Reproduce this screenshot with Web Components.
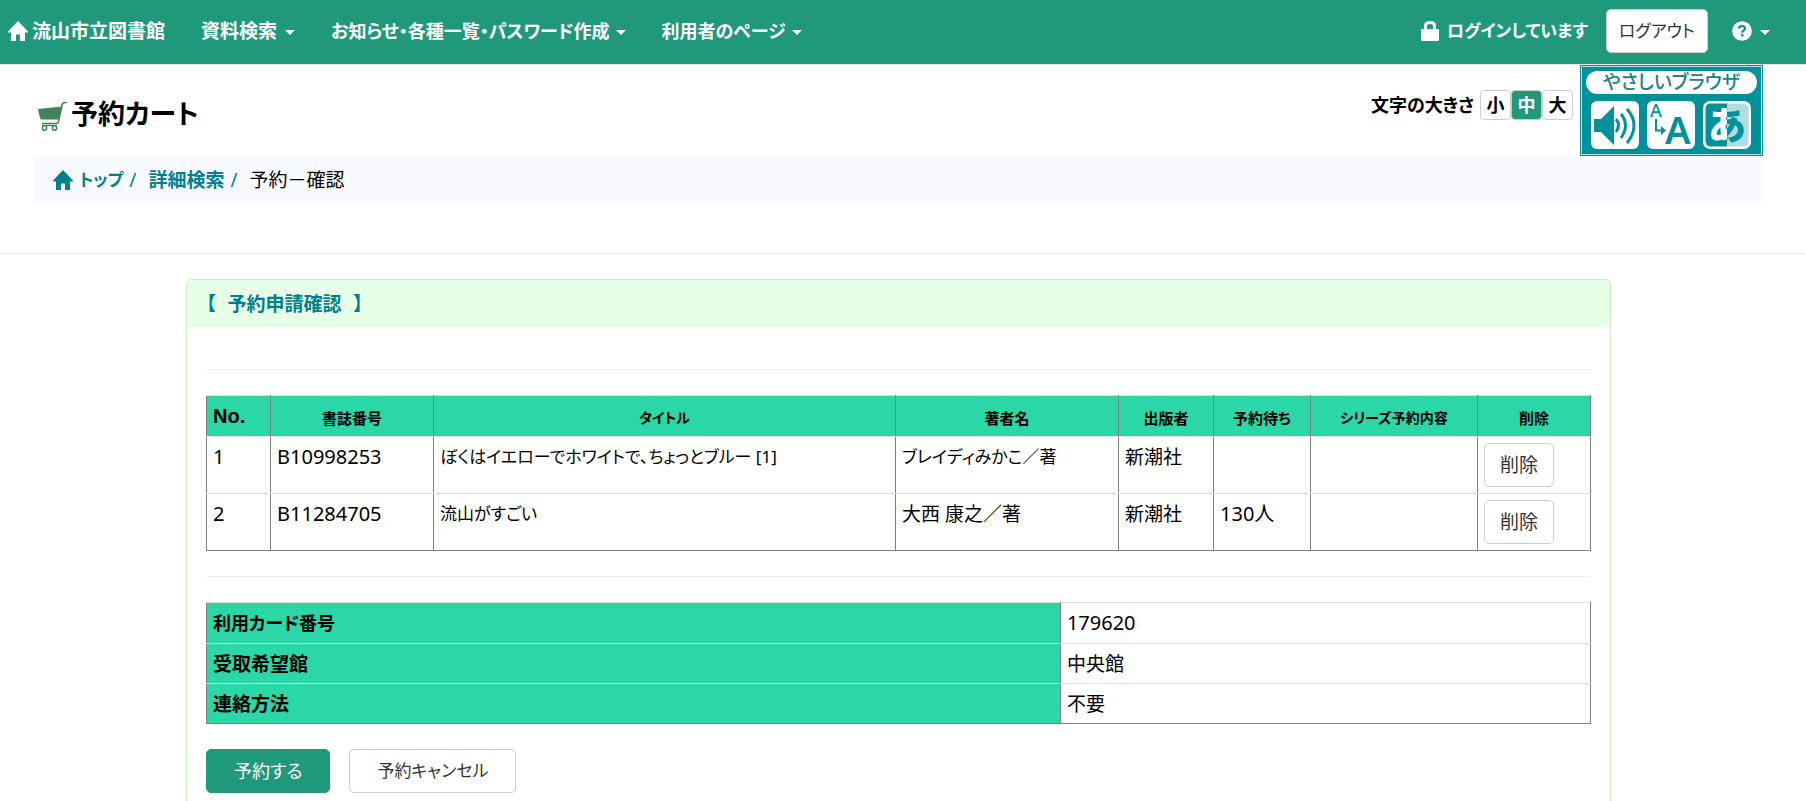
<!DOCTYPE html>
<html lang="ja">
<head>
<meta charset="utf-8">
<title>予約カート</title>
<style>
  html { --green: #20997a; --mint: #2bd6a7; --link: #00808f; --line: #ccc; --rule: #eee; }
  body {
    margin: 0; background: #fff; color: #000;
    font: 19px/28px "Noto Sans", "Noto Sans CJK JP", sans-serif;
    font-feature-settings: "palt";
  }
</style>
</head>
<body>
<library-app></library-app>

<script>
const define = (name, html) => customElements.define(name, class extends HTMLElement {
  constructor() {
    super();
    this.attachShadow({ mode: 'open' }).innerHTML =
      '<style>*{box-sizing:border-box} a{color:inherit;text-decoration:none}</style>' + html;
  }
});

define('home-icon', `
  <style>:host{display:block;width:20px;height:20px} svg{display:block}</style>
  <svg width="20" height="20" viewBox="0 0 20 20" fill="currentColor" aria-hidden="true">
    <path d="M10 0L20 10.500Q20 11.500 19.500 11.500H17V20H12V13.500H8V20H3V11.500H.5Q0 11.500 0 10.500Z"/>
  </svg>`);

define('drop-caret', `
  <style>:host{display:block;width:10px;height:5px} svg{display:block}</style>
  <svg width="10" height="5" viewBox="0 0 10 5" fill="currentColor" aria-hidden="true"><path d="M0 0H10L5 5Z"/></svg>`);

define('nav-menu', `
  <style>
    :host{display:block}
    button{display:flex;align-items:center;gap:var(--gap,8px);margin:0;padding:0;border:0;background:none;
      color:inherit;font:inherit;font-feature-settings:inherit;cursor:pointer;white-space:nowrap}
    drop-caret{margin-top:2px}
  </style>
  <button type="button" aria-haspopup="true"><slot></slot><drop-caret></drop-caret></button>`);

define('ui-button', `
  <style>
    :host{display:inline-block;vertical-align:top}
    button{display:block;height:44px;margin:0;padding:0 var(--pad,15px);border:1px solid var(--line);border-radius:5px;
      background:#fff;color:#333;font:inherit;font-weight:400;font-feature-settings:inherit;cursor:pointer;white-space:nowrap}
    :host([primary]) button{background:var(--green);border-color:var(--green);color:#fff}
  </style>
  <button type="button"><slot></slot></button>`);

define('app-navbar', `
  <style>
    :host{display:block;background:var(--green);border-bottom:1px solid #e7e7e7;color:#fff;font-weight:700}
    nav{display:flex;align-items:center;height:64px;padding:0 36px 2px 8px}
    .brand{display:flex;align-items:center;gap:4px;white-space:nowrap}
    nav-menu,.brand{margin-right:36px}
    .kana{font-size:18px;--gap:6px}
    .state{display:flex;align-items:center;gap:8px;margin-left:auto;margin-right:18px;font-size:17px;white-space:nowrap}
    ui-button{margin-right:24px;font-size:17px;--pad:12px}
    nav-menu.help{margin-right:0}
    svg{display:block}
  </style>
  <nav>
    <a class="brand" href="#"><home-icon></home-icon><span>流山市立図書館</span></a>
    <nav-menu>資料検索</nav-menu>
    <nav-menu class="kana">お知らせ・各種一覧・パスワード作成</nav-menu>
    <nav-menu class="kana">利用者のページ</nav-menu>
    <div class="state">
      <svg width="18" height="20" viewBox="0 0 18 20" aria-hidden="true">
        <path fill="#fff" fill-rule="evenodd" d="M3 8V4.500Q3 0 9 0T15 4.500V8H17Q18 8 18 9V19Q18 20 17 20H1Q0 20 0 19V9Q0 8 1 8ZM6 8H12V5Q12 3 9 3T6 5Z"/>
      </svg>
      <span>ログインしています</span>
    </div>
    <ui-button>ログアウト</ui-button>
    <nav-menu class="help">
      <svg width="20" height="20" viewBox="0 0 20 20" role="img" aria-label="ヘルプ">
        <circle cx="10" cy="10" r="9.800" fill="#fff"/>
        <path d="M7 7.600Q7.200 5 10 5T13 7.500Q13 9 11.200 9.800Q10.200 10.300 10.200 11.800" fill="none" stroke="#20997a" stroke-width="2.400"/>
        <rect x="9" y="13" width="2.500" height="2.500" fill="#20997a"/>
      </svg>
    </nav-menu>
  </nav>`);

define('size-picker', `
  <style>
    :host{display:flex;align-items:center;font-size:18px;font-weight:700}
    .label{margin-right:6px;white-space:nowrap}
    button{width:31px;height:30px;margin:0;padding:0;border:1px solid var(--line);border-radius:4px;background:#fff;
      color:#000;font:inherit;font-size:18px;line-height:26px;cursor:pointer}
    button[aria-pressed=true]{background:var(--green);color:#fff}
  </style>
  <span class="label">文字の大きさ</span>
  <button type="button" aria-pressed="false">小</button><button type="button" aria-pressed="true">中</button><button type="button" aria-pressed="false">大</button>`);

define('easy-browser', `
  <style>
    :host{display:block}
    a{display:block;width:183px;height:91px;padding:1px;background:#00919b}
    .frame{display:flex;flex-direction:column;align-items:center;height:100%;padding:4px 0 0;border:1px solid #b5e0e3}
    .name{width:171px;height:23px;border-radius:12px;background:#fff;color:#1d8289;
      font-size:19px;line-height:23px;font-weight:500;text-align:center}
    .icons{display:flex;gap:8px;margin:7px 2px 0 0}
    svg{display:block;overflow:visible}
  </style>
  <a href="#"><div class="frame">
    <div class="name">やさしいブラウザ</div>
    <div class="icons">
      <svg width="48" height="48" viewBox="0 0 48 48" aria-hidden="true">
        <rect width="48" height="48" rx="6" fill="#fff"/>
        <path d="M3 18H10L23 5V44L10 31H3Z" fill="#00919b"/>
        <path d="M25 18Q30 24 25 31M30 13Q39 24 30 37M36 8Q50 24 36 42" fill="none" stroke="#00919b" stroke-width="3"/>
      </svg>
      <svg width="48" height="48" viewBox="0 0 48 48" aria-hidden="true" fill="#00919b" font-family="Noto Sans">
        <rect width="48" height="48" rx="6" fill="#fff"/>
        <text x="3" y="16" font-size="18" font-weight="500">A</text>
        <text x="18" y="43" font-size="38" font-weight="600">A</text>
        <path d="M9 18V29.500H14" fill="none" stroke="#00919b" stroke-width="2"/><path d="M14 25L19 29.500L14 34Z"/>
      </svg>
      <svg width="48" height="48" viewBox="0 0 48 48" aria-hidden="true">
        <defs><linearGradient id="split" gradientUnits="userSpaceOnUse" x1="0" x2="48" y1="0" y2="0">
          <stop offset="50%" stop-color="#fff"/><stop offset="50%" stop-color="#00919b"/></linearGradient></defs>
        <rect width="48" height="48" rx="7" fill="#fff"/>
        <path d="M24 2.500H8Q2.500 2.500 2.500 8V40Q2.500 45.500 8 45.500H24Z" fill="#00919b"/>
        <path d="M24 2.500H40Q45.500 2.500 45.500 8V40Q45.500 45.500 40 45.500H24Z" fill="#b0dde0"/>
        <text x="24" y="38" font-size="38" font-weight="900" text-anchor="middle" font-family="Noto Sans CJK JP" fill="url(#split)">あ</text>
      </svg>
    </div>
  </div></a>`);

define('page-heading', `
  <style>
    :host{display:flex;align-items:flex-start;height:91px}
    h1{display:flex;align-items:center;gap:4px;flex:1;margin:0;padding:31px 0 0 4px;font-size:27px;line-height:36px}
    size-picker{margin:25px 7px 0 0}
    svg{display:block;margin-top:4px}
  </style>
  <h1>
    <svg width="29" height="30" viewBox="0 0 29 30" fill="none" stroke="#41835a" aria-hidden="true">
      <path d="M0 8L24 5.500L20.500 18.500H3.500Q2.500 18.500 2 17Z" fill="#41835a" stroke="none"/>
      <path d="M29 1.500H27Q24.500 1.500 24 4L20.500 20.500Q20 22.500 18 22.500H4" stroke-width="1.600"/>
      <path d="M4 24.500H19" stroke-width="1.200"/>
      <circle cx="6.500" cy="27" r="2.200" stroke-width="1.500"/><circle cx="16.500" cy="27" r="2.200" stroke-width="1.500"/>
    </svg>
    <span>予約カート</span>
  </h1>
  <size-picker></size-picker>
  <easy-browser></easy-browser>`);

define('crumb-trail', `
  <style>
    :host{display:block;border-radius:5px;background:#f8faff}
    ol{display:flex;align-items:center;height:47px;margin:0;padding:0 19px;list-style:none;white-space:nowrap}
    li{display:flex;align-items:center}
    a{display:flex;align-items:center;gap:6px;color:var(--link);font-weight:700}
    .kana{font-size:17px}
    li+li::before{content:"/";padding:0 12px 0 6px;color:var(--link)}
  </style>
  <nav aria-label="パンくず"><ol>
    <li><a href="#"><home-icon></home-icon><span class="kana">トップ</span></a></li>
    <li><a href="#">詳細検索</a></li>
    <li aria-current="page">予約－確認</li>
  </ol></nav>`);

define('panel-card', `
  <style>
    :host{display:block;border:1px solid #d0e9c6;border-radius:5px 5px 0 0;background:#fff}
    header{padding:10px 19px 9px;border-radius:4px 4px 0 0;background:#e6ffe6}
    .body{padding:42px 19px 25px}
  </style>
  <header><slot name="title"></slot></header>
  <div class="body"><slot></slot></div>`);

define('panel-title', `
  <style>:host{display:block} h2{display:flex;gap:12px;margin:0;color:var(--link);font:inherit;font-weight:700}</style>
  <h2><span>【</span><slot></slot><span>】</span></h2>`);

const tableCss = `
  :host{display:block}
  table{width:100%;table-layout:fixed;border-collapse:collapse;border:1px solid #808080}
  th,td{padding:6px;border:1px solid #808080;border-top-color:#ddd;border-bottom-color:#ddd;text-align:left;vertical-align:top}
  table{border-top-color:#ddd}
  tbody tr:last-child>*{border-bottom-color:#808080}
  th{background:var(--mint)}
  .num{font-size:20px}`;

define('reserve-list', `
  <style>${tableCss}
    thead th{height:41px;padding:8px 6px 4px;font-size:15px;text-align:center;vertical-align:middle}
    thead th.no{padding:6px;font-family:"Liberation Sans",sans-serif;font-size:20px;text-align:left}
    thead th.kana{font-size:14px}
    td{height:57px}
    td.kana{font-size:17px}
  </style>
  <table>
    <colgroup><col style="width:64px"><col style="width:163px"><col><col style="width:223px"><col style="width:95px"><col style="width:97px"><col style="width:167px"><col style="width:113px"></colgroup>
    <thead><tr><th class="no">No.</th><th>書誌番号</th><th class="kana">タイトル</th><th>著者名</th><th>出版者</th><th>予約待ち</th><th class="kana">シリーズ予約内容</th><th>削除</th></tr></thead>
    <tbody>
      <tr><td class="num">1</td><td class="num">B10998253</td><td class="kana">ぼくはイエローでホワイトで、ちょっとブルー [1]</td><td class="kana">ブレイディみかこ／著</td><td>新潮社</td><td></td><td></td><td><ui-button>削除</ui-button></td></tr>
      <tr><td class="num">2</td><td class="num">B11284705</td><td class="kana">流山がすごい</td><td>大西 康之／著</td><td>新潮社</td><td class="num">130人</td><td></td><td><ui-button>削除</ui-button></td></tr>
    </tbody>
  </table>`);

define('reserve-terms', `
  <style>${tableCss}
    th,td{height:40px;padding:6px 6px 5px}
    tr:first-child>*{height:41px}
    col:first-child{width:61.7%}
    .kana{font-size:18px}
  </style>
  <table>
    <colgroup><col><col></colgroup>
    <tbody>
      <tr><th scope="row" class="kana">利用カード番号</th><td class="num">179620</td></tr>
      <tr><th scope="row">受取希望館</th><td>中央館</td></tr>
      <tr><th scope="row">連絡方法</th><td>不要</td></tr>
    </tbody>
  </table>`);

define('library-app', `
  <style>
    :host{display:block;height:100vh;overflow:hidden}
    main{padding:0 43px 0 34px}
    .rule{margin:50px -43px 25px -34px}
    hr{height:1px;margin:25px 0;border:0;background:var(--rule)}
    panel-card{margin:0 152px}
    panel-card hr:first-of-type{margin-top:0}
    .actions{display:flex;gap:19px;margin-top:25px;font-size:17px;--pad:27px}
    .actions [primary]{font-size:18px}
  </style>
  <app-navbar></app-navbar>
  <main>
    <page-heading></page-heading>
    <crumb-trail></crumb-trail>
    <hr class="rule">
    <panel-card>
      <panel-title slot="title">予約申請確認</panel-title>
      <hr>
      <reserve-list></reserve-list>
      <hr>
      <reserve-terms></reserve-terms>
      <div class="actions"><ui-button primary>予約する</ui-button><ui-button>予約キャンセル</ui-button></div>
    </panel-card>
  </main>`);
</script>
</body>
</html>
